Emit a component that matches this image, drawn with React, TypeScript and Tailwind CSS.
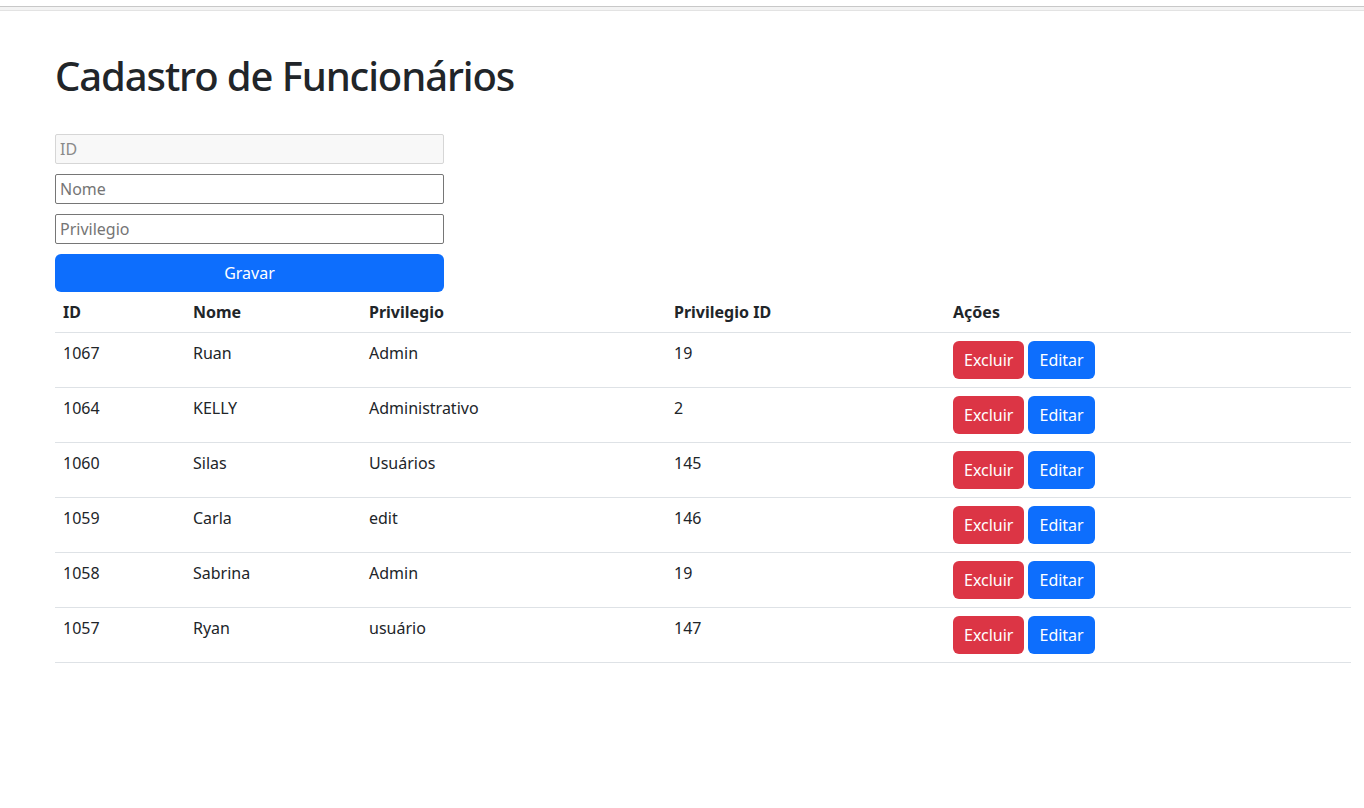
const rows = [
  { id: 1067, nome: "Ruan", privilegio: "Admin", privId: 19 },
  { id: 1064, nome: "KELLY", privilegio: "Administrativo", privId: 2 },
  { id: 1060, nome: "Silas", privilegio: "Usuários", privId: 145 },
  { id: 1059, nome: "Carla", privilegio: "edit", privId: 146 },
  { id: 1058, nome: "Sabrina", privilegio: "Admin", privId: 19 },
  { id: 1057, nome: "Ryan", privilegio: "usuário", privId: 147 },
];

export default function App() {
  return (
    <div className="min-h-[808px] bg-white text-[#212529] font-['Noto_Sans',sans-serif]">
      {/* browser strip at the top */}
      <div className="h-[6px]" />
      <div className="h-px bg-[#c8c8c8]" />
      <div className="h-[3px] bg-[#f3f3f3]" />
      <div className="h-px bg-[#e3e3e3]" />

      <div className="ml-[55px] mr-[13px]">
        <h1 className="mt-[41px] text-[40px] leading-[48px] font-medium tracking-[-1.1px]">Cadastro de Funcionários</h1>

        <form className="mt-[34px] w-[389px] flex flex-col gap-[10px]" onSubmit={(e) => e.preventDefault()}>
          <input
            disabled
            placeholder="ID"
            className="h-[30px] px-[4px] text-[16px] border border-[#d6d6d6] bg-[#f8f8f8] rounded-[2px] placeholder:text-[#8a8a8a]"
          />
          <input placeholder="Nome" className="h-[30px] px-[4px] text-[16px] border border-[#767676] rounded-[2px] placeholder:text-[#757575]" />
          <input placeholder="Privilegio" className="h-[30px] px-[4px] text-[16px] border border-[#767676] rounded-[2px] placeholder:text-[#757575]" />
          <button className="h-[38px] rounded-[6px] bg-[#0d6efd] text-white text-[16px]">Gravar</button>
        </form>

        <table className="w-full text-[16px] leading-[24px] border-collapse">
          <thead>
            <tr className="border-b border-[#dee2e6] text-left">
              <th className="w-[130px] px-2 py-2 font-bold">ID</th>
              <th className="w-[176px] px-2 py-2 font-bold">Nome</th>
              <th className="w-[305px] px-2 py-2 font-bold">Privilegio</th>
              <th className="w-[279px] px-2 py-2 font-bold">Privilegio ID</th>
              <th className="px-2 py-2 font-bold">Ações</th>
            </tr>
          </thead>
          <tbody>
            {rows.map((r) => (
              <tr key={r.id} className="border-b border-[#dee2e6] align-top">
                <td className="px-2 py-2">{r.id}</td>
                <td className="px-2 py-2">{r.nome}</td>
                <td className="px-2 py-2">{r.privilegio}</td>
                <td className="px-2 py-2">{r.privId}</td>
                <td className="px-2 py-2">
                  <div className="flex gap-[4px]">
                    <button className="h-[38px] px-[11px] rounded-[6px] bg-[#dc3545] text-white">Excluir</button>
                    <button className="h-[38px] px-[11px] rounded-[6px] bg-[#0d6efd] text-white">Editar</button>
                  </div>
                </td>
              </tr>
            ))}
          </tbody>
        </table>
      </div>
    </div>
  );
}
